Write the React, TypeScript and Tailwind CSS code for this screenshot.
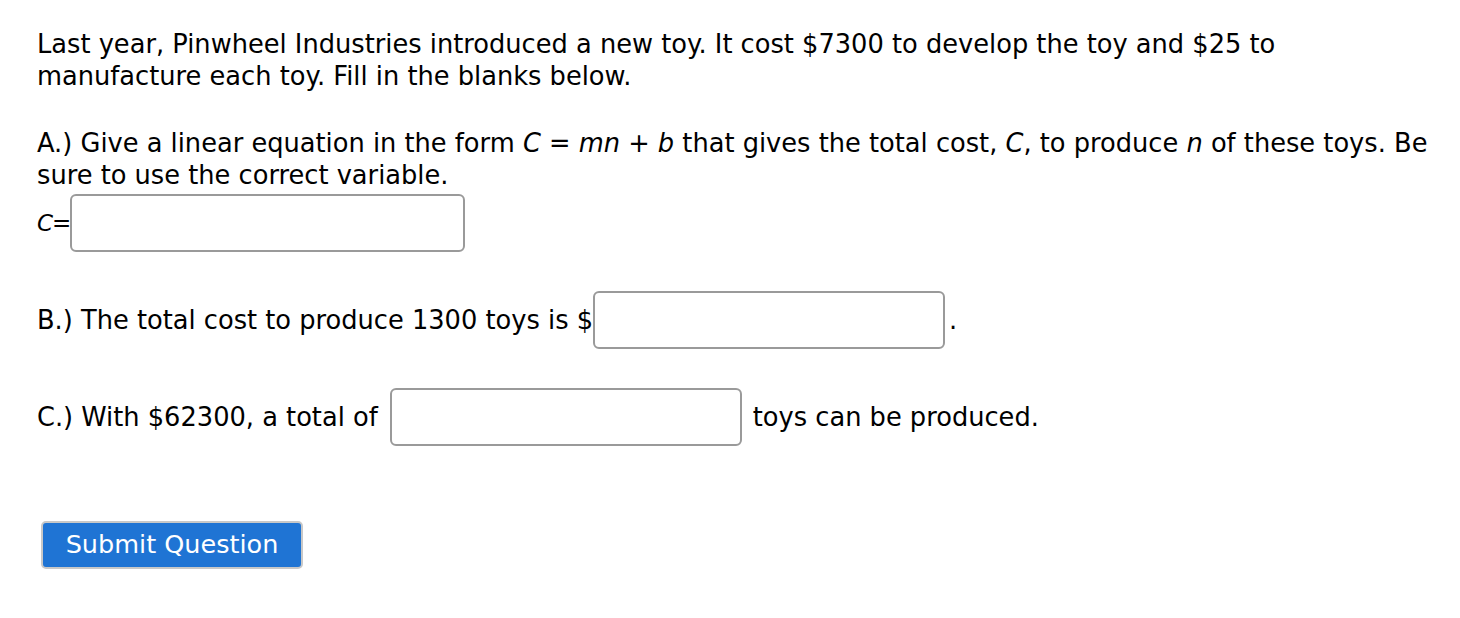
import React from 'react';

const font = { fontFamily: '"DejaVu Sans", "Open Sans", sans-serif' };

const Blank: React.FC<{ className?: string }> = ({ className = '' }) => (
  <input
    type="text"
    className={`h-[58px] rounded-[6px] border-2 border-[#9a9a9a] bg-white outline-none align-middle ${className}`}
  />
);

export default function App() {
  return (
    <div className="w-[1460px] h-[618px] bg-white text-black" style={font}>
      <div className="pl-[37px] pt-[28px] text-[25.7px] leading-[32px]">
        <p>
          Last year, Pinwheel Industries introduced a new toy. It cost $7300 to develop the toy and $25 to
          <br />
          manufacture each toy. Fill in the blanks below.
        </p>

        <p className="mt-[35px]">
          A.) Give a linear equation in the form <i>C</i> = <i>mn</i> + <i>b</i> that gives the total cost, <i>C</i>, to produce <i>n</i> of these toys. Be
          <br />
          sure to use the correct variable.
        </p>

        <div className="flex items-center mt-[3px]">
          <span className="text-[23px] tracking-[-1px]"><i>C</i>=</span>
          <Blank className="w-[395px]" />
        </div>

        <div className="flex items-center mt-[39px]">
          <span>B.) The total cost to produce 1300 toys is $</span>
          <Blank className="w-[352px]" />
          <span className="ml-[4px]">.</span>
        </div>

        <div className="flex items-center mt-[39px]">
          <span className="mr-[12px]">C.) With $62300, a total of</span>
          <Blank className="w-[352px]" />
          <span className="ml-[11px]">toys can be produced.</span>
        </div>

        <button className="mt-[75px] ml-[4px] w-[262px] h-[48px] rounded-[5px] border-2 border-[#c8c8c8] bg-[#1f74d4] text-white text-[25.5px] leading-none">
          Submit Question
        </button>
      </div>
    </div>
  );
}
